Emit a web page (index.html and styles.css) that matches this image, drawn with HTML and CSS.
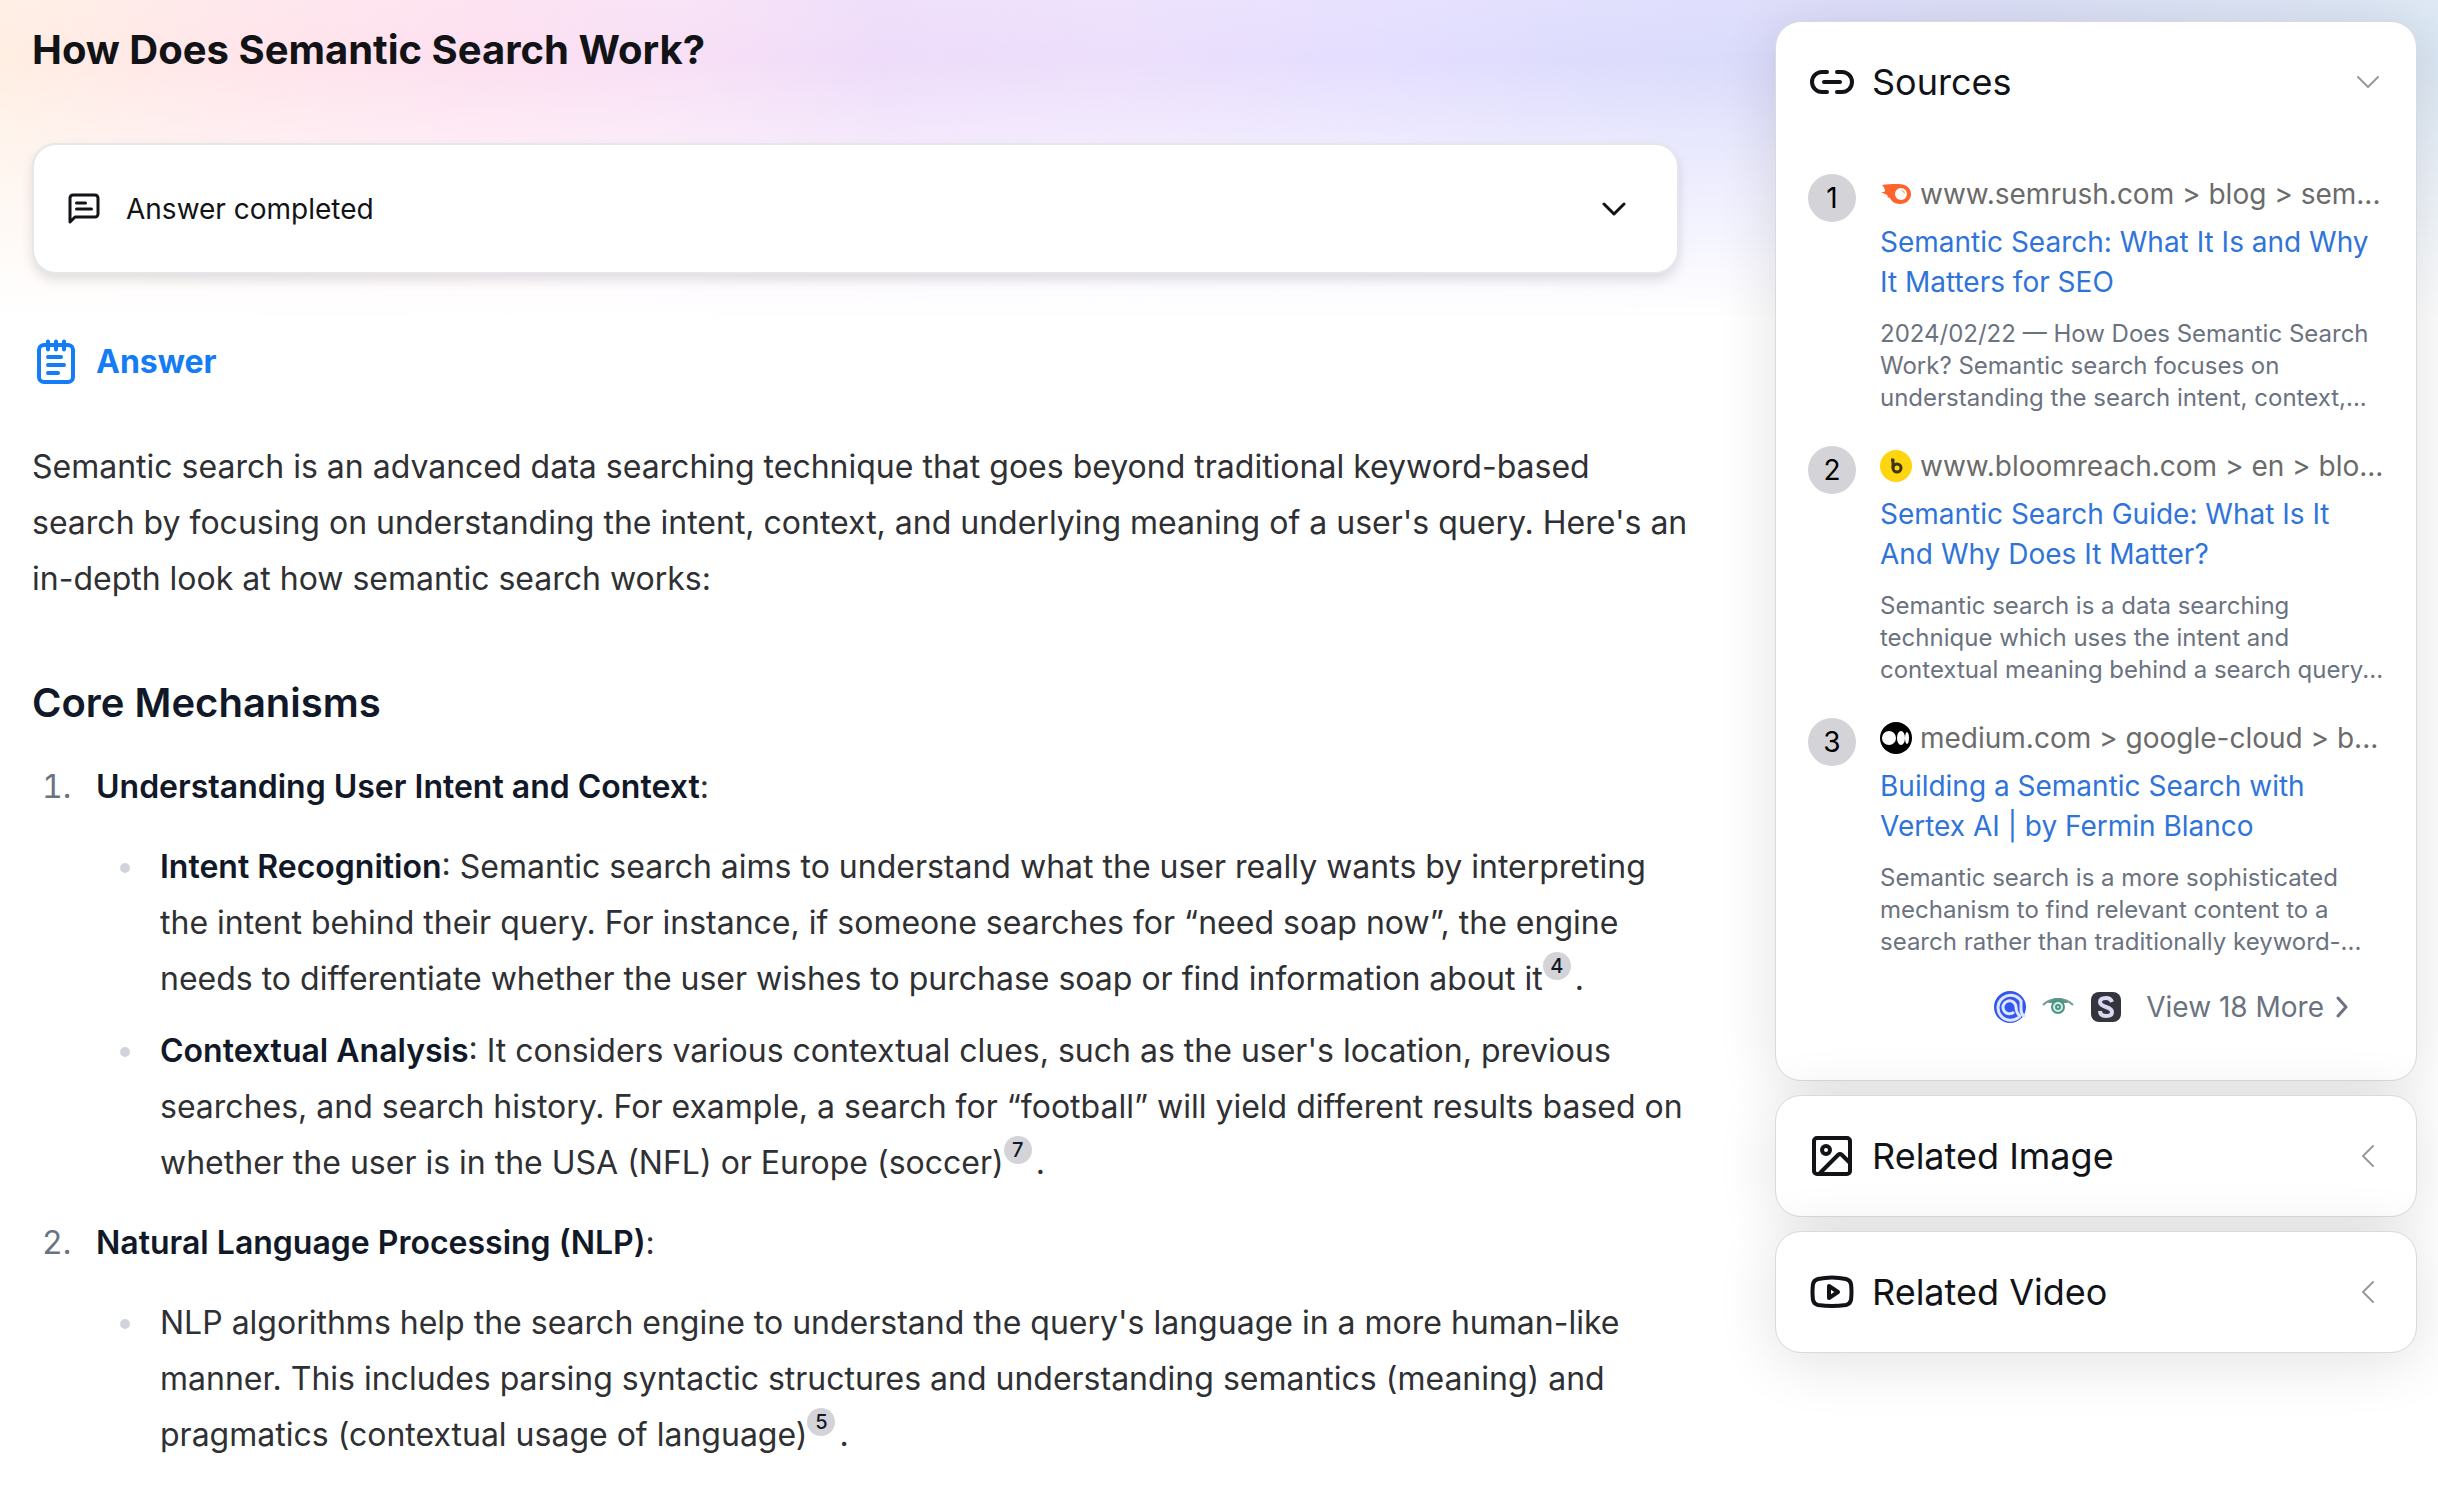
FILE: index.html
```html
<!DOCTYPE html>
<html lang="en">
<head>
<meta charset="utf-8">
<title>How Does Semantic Search Work?</title>
<meta name="viewport" content="width=device-width, initial-scale=1">
<link rel="stylesheet" href="styles.css">
</head>
<body>
<div class="page">
  <main class="content">
    <h1 class="question">How Does Semantic Search Work?</h1>

    <button class="status" type="button">
      <svg class="icon-32" viewBox="0 0 32 32" fill="none" stroke="currentColor" stroke-width="3" stroke-linejoin="round" stroke-linecap="round" aria-hidden="true">
        <path d="M2 29V5a3 3 0 0 1 3-3h22a3 3 0 0 1 3 3v16a3 3 0 0 1-3 3H7z"/>
        <path d="M8.500 10h9M8.500 16h15"/>
      </svg>
      <span class="status-text">Answer completed</span>
      <svg class="chevron-dark" viewBox="0 0 24 24" fill="none" stroke="currentColor" stroke-width="3" stroke-linecap="round" stroke-linejoin="round" aria-hidden="true"><path d="M2 7l10 10L22 7"/></svg>
    </button>

    <h2 class="answer-title">
      <svg class="answer-icon" viewBox="0 0 40 46" fill="none" stroke="currentColor" stroke-width="4" stroke-linecap="round" aria-hidden="true">
        <rect x="3" y="6" width="34" height="37" rx="5"/>
        <path d="M12 2.500v8M20 2.500v8M28 2.500v8M12 18h13M12 26h16M12 34h10"/>
      </svg>
      <span>Answer</span>
    </h2>

    <article class="prose">
      <p>Semantic search is an advanced data searching technique that goes beyond traditional keyword-based search by focusing on understanding the intent, context, and underlying meaning of a user's query. Here's an in-depth look at how semantic search works:</p>
      <h3>Core Mechanisms</h3>
      <ol>
        <li>
          <strong>Understanding User Intent and Context</strong>:
          <ul>
            <li><strong>Intent Recognition</strong>: Semantic search aims to understand what the user really wants by interpreting the intent behind their query. For instance, if someone searches for “need soap now”, the engine needs to differentiate whether the user wishes to purchase soap or find information about it<a class="cite" href="#source-4">4</a>.</li>
            <li><strong>Contextual Analysis</strong>: It considers various contextual clues, such as the user's location, previous searches, and search history. For example, a search for “football” will yield different results based on whether the user is in the USA (NFL) or Europe (soccer)<a class="cite" href="#source-7">7</a>.</li>
          </ul>
        </li>
        <li>
          <strong>Natural Language Processing (NLP)</strong>:
          <ul>
            <li>NLP algorithms help the search engine to understand the query's language in a more human-like manner. This includes parsing syntactic structures and understanding semantics (meaning) and pragmatics (contextual usage of language)<a class="cite" href="#source-5">5</a>.</li>
          </ul>
        </li>
        <li><strong>Machine Learning (ML)</strong>:</li>
      </ol>
    </article>
  </main>

  <aside class="sidebar">
    <section class="card">
      <button class="card-head" type="button" aria-expanded="true">
        <svg class="icon-44" viewBox="0 0 44 44" fill="none" stroke="currentColor" stroke-width="4" stroke-linecap="round" aria-hidden="true">
          <path d="M17 12h-5a10 10 0 0 0 0 20h5M27 12h5a10 10 0 0 1 0 20h-5M14 22h16"/>
        </svg>
        <span class="card-title">Sources</span>
        <svg class="chevron" viewBox="0 0 24 24" fill="none" stroke="currentColor" stroke-width="2" stroke-linecap="round" stroke-linejoin="round" aria-hidden="true"><path d="M2 7l10 10L22 7"/></svg>
      </button>

      <ol class="sources">
        <li class="source">
          <span class="number">1</span>
          <div class="source-body">
            <div class="source-url">
              <svg class="icon-32" viewBox="0 0 32 32" aria-hidden="true">
                <path fill="#ff642d" d="M2 7c4-1 9-1 16-1 8 0 13 4 13 10s-5 10-11 10c-5 0-9-3-10-6l-3-1c1-1 1-1 0-2L1 14c3 0 4 0 4-1 0-2-1-4-3-6z"/>
                <circle cx="21" cy="16" r="6" fill="#fff"/>
                <path fill="#ffb199" d="M21 12a4 4 0 0 1 4 4c-1-1-3-2-4-4z"/>
              </svg>
              <span>www.semrush.com &gt; blog &gt; sem...</span>
            </div>
            <a class="source-link" href="#source-1">Semantic Search: What It Is and Why It Matters for SEO</a>
            <p class="source-text">2024/02/22 — How Does Semantic Search Work? Semantic search focuses on understanding the search intent, context,...</p>
          </div>
        </li>
        <li class="source">
          <span class="number">2</span>
          <div class="source-body">
            <div class="source-url">
              <svg class="icon-32" viewBox="0 0 32 32" aria-hidden="true">
                <circle cx="16" cy="16" r="16" fill="#ffd50f"/>
                <g fill="none" stroke="#3b3512" stroke-width="3"><circle cx="17" cy="18" r="4"/><path d="M13 18V9M11 10h3"/></g>
              </svg>
              <span>www.bloomreach.com &gt; en &gt; blo...</span>
            </div>
            <a class="source-link" href="#source-2">Semantic Search Guide: What Is It And Why Does It Matter?</a>
            <p class="source-text">Semantic search is a data searching technique which uses the intent and contextual meaning behind a search query...</p>
          </div>
        </li>
        <li class="source">
          <span class="number">3</span>
          <div class="source-body">
            <div class="source-url">
              <svg class="icon-32" viewBox="0 0 32 32" aria-hidden="true">
                <circle cx="16" cy="16" r="16" fill="#000"/>
                <g fill="#fff"><circle cx="9" cy="16" r="7"/><ellipse cx="21" cy="16" rx="4" ry="7"/><ellipse cx="27" cy="16" rx="2" ry="6"/></g>
              </svg>
              <span>medium.com &gt; google-cloud &gt; b...</span>
            </div>
            <a class="source-link" href="#source-3">Building a Semantic Search with Vertex AI | by Fermin Blanco</a>
            <p class="source-text">Semantic search is a more sophisticated mechanism to find relevant content to a search rather than traditionally keyword-...</p>
          </div>
        </li>
      </ol>

      <button class="more" type="button">
        <svg class="icon-32" viewBox="0 0 32 32" aria-hidden="true">
          <circle cx="16" cy="16" r="16" fill="#3355f0"/>
          <path d="M25 26A12.500 12.500 0 1 1 27 10V18c0 4 1 6 4 8" fill="none" stroke="#dfe6ff" stroke-width="3"/>
          <path d="M20 21a6.500 6.500 0 1 1 2-5c0 4 1 7 5 10" fill="none" stroke="#dfe6ff" stroke-width="3"/>
        </svg>
        <svg class="icon-32" viewBox="0 0 32 32" aria-hidden="true">
          <path d="M1 14c5-5 9-6 15-6s10 1 15 6" fill="none" stroke="#6f9f92" stroke-width="2"/>
          <path d="M6 12c3-4 6-5 10-5s7 1 10 5z" fill="#5c9487"/>
          <circle cx="16" cy="16" r="6" fill="#d5efe8" stroke="#4b9485" stroke-width="2"/>
          <circle cx="16" cy="16" r="2" fill="none" stroke="#4b9485" stroke-width="2"/>
        </svg>
        <svg class="icon-32" viewBox="0 0 32 32" aria-hidden="true">
          <rect x="1" y="1" width="30" height="30" rx="8" fill="#34343d"/>
          <path d="M22 11c-1-3-3-4-6-4s-6 1-6 4c0 6 12 4 12 10 0 3-3 4-6 4s-6-1-6-5" fill="none" stroke="#dcd8f4" stroke-width="4"/>
        </svg>
        <span class="more-text">View 18 More
          <svg class="more-arrow" viewBox="0 0 12 24" fill="none" stroke="currentColor" stroke-width="3" stroke-linecap="round" stroke-linejoin="round" aria-hidden="true"><path d="M2 3l8 9-8 9"/></svg>
        </span>
      </button>
    </section>

    <section class="card">
      <button class="card-head" type="button" aria-expanded="false">
        <svg class="icon-44" viewBox="0 0 44 44" fill="none" stroke="currentColor" stroke-width="4" stroke-linejoin="round" aria-hidden="true">
          <rect x="4" y="4" width="36" height="36" rx="3"/>
          <circle cx="16" cy="16" r="4"/>
          <path d="M10 39l18-18a3 3 0 0 1 4 0l8 8"/>
        </svg>
        <span class="card-title">Related Image</span>
        <svg class="chevron" viewBox="0 0 24 24" fill="none" stroke="currentColor" stroke-width="2" stroke-linecap="round" stroke-linejoin="round" aria-hidden="true"><path d="M17 2L7 12l10 10"/></svg>
      </button>
    </section>

    <section class="card">
      <button class="card-head" type="button" aria-expanded="false">
        <svg class="icon-44" viewBox="0 0 44 44" fill="none" stroke="currentColor" stroke-width="4" stroke-linejoin="round" aria-hidden="true">
          <path d="M8 9c9-2 19-2 28 0q4 1 5 5 1 8 0 16-1 4-5 5-14 2-28 0-4-1-5-5-1-8 0-16 1-4 5-5z"/>
          <path d="M19 16v12l9-6z"/>
        </svg>
        <span class="card-title">Related Video</span>
        <svg class="chevron" viewBox="0 0 24 24" fill="none" stroke="currentColor" stroke-width="2" stroke-linecap="round" stroke-linejoin="round" aria-hidden="true"><path d="M17 2L7 12l10 10"/></svg>
      </button>
    </section>
  </aside>
</div>
</body>
</html>
```
FILE: styles.css
```css
*,
*::before,
*::after {
  box-sizing: border-box;
}

body {
  margin: 0;
  background: #fff;
  color: #111317;
  font-family: Inter, "Liberation Sans", sans-serif;
  font-optical-sizing: none;
  font-size: 28px;
  line-height: 40px;
}

button {
  margin: 0;
  border: 0;
  background: none;
  color: inherit;
  font: inherit;
  text-align: left;
  cursor: pointer;
}

a {
  color: inherit;
  text-decoration: none;
}

svg {
  display: block;
  flex: none;
}

.page {
  display: grid;
  grid-template-columns: minmax(0, 1fr) 642px;
  column-gap: 96px;
  align-items: start;
  height: 100vh;
  overflow: hidden;
  padding: 0 21px 0 32px;
  background:
    linear-gradient(to bottom, rgba(255, 255, 255, 0.1), rgba(255, 255, 255, 0) 60px, rgba(255, 255, 255, 0.4) 150px, #fff 320px),
    radial-gradient(circle at 1720px 90px, #dbdbfc, rgba(219, 219, 252, 0) 320px),
    linear-gradient(to right, #ffeee2, #ffe6ea 220px, #fde0f0 480px, #f8e0f6 680px, #eedcfa 880px, #ecdffc 1120px, #e4deff 1400px, #dfddfd 1700px, #d8dcf6 2000px, #dbe7f4);
}

.content {
  min-width: 0;
}

.question {
  margin: 0;
  padding: 22px 0 65px;
  font-size: 40px;
  line-height: 56px;
  font-weight: 700;
}

.status {
  display: flex;
  align-items: center;
  width: 100%;
  height: 131px;
  padding: 0 51px 0 34px;
  border: 2px solid #e5e7eb;
  border-radius: 24px;
  background: #fff;
  box-shadow: 0 6px 12px rgba(0, 0, 0, 0.12);
}

.status-text {
  flex: 1;
  padding-left: 26px;
}

.icon-32 {
  width: 32px;
  height: 32px;
}

.icon-44 {
  width: 44px;
  height: 44px;
}

.chevron-dark {
  width: 24px;
  height: 24px;
}

.answer-title {
  display: flex;
  align-items: center;
  gap: 20px;
  margin: 64px 0 53px;
  padding-left: 4px;
  color: #147df5;
  font-size: 32px;
  line-height: 48px;
  font-weight: 700;
}

.answer-icon {
  width: 40px;
  height: 46px;
}

.prose {
  margin-right: -16px;
  color: #2f3033;
  font-size: 32px;
  line-height: 56px;
}

.prose p {
  margin: 0;
}

.prose h3 {
  margin: 68px 0 28px;
  color: #111827;
  font-size: 40px;
  line-height: 56px;
  font-weight: 600;
}

.prose strong {
  color: #111827;
  font-weight: 600;
}

.prose ol,
.prose ul {
  margin: 0;
  padding-left: 64px;
}

.prose li + li {
  margin-top: 24px;
}

.prose ul {
  margin: 24px 0 0;
  list-style: none;
}

.prose ul li + li {
  margin-top: 16px;
}

.prose ol > li::marker {
  content: counter(list-item) ".\a0\2002";
  color: #6b7280;
}

/* Bullet hangs in the list's left padding and takes no width in the line. */
.prose ul > li::before {
  content: "";
  float: left;
  width: 10px;
  height: 10px;
  margin: 24px 0 0 -40px;
  border-radius: 50%;
  background: #d1d5db;
}

.cite {
  display: inline-block;
  width: 28px;
  height: 28px;
  margin-right: 4px;
  border-radius: 50%;
  background: #d4d4d8;
  color: #111827;
  font-size: 20px;
  line-height: 28px;
  font-weight: 500;
  text-align: center;
  vertical-align: 17px;
}

.sidebar {
  display: flex;
  flex-direction: column;
  gap: 14px;
  padding-top: 21px;
}

.card {
  border: 1px solid #d9dade;
  border-radius: 26px;
  background: #fff;
  box-shadow: 0 8px 60px rgba(0, 0, 0, 0.12);
}

.card-head {
  display: flex;
  align-items: center;
  width: 100%;
  height: 120px;
  padding: 0 36px 0 34px;
  font-size: 36px;
  line-height: 48px;
}

.card-title {
  flex: 1;
  padding-left: 18px;
}

.chevron {
  width: 24px;
  height: 24px;
  color: #9a9a9a;
}

.sources {
  display: flex;
  flex-direction: column;
  gap: 32px;
  margin: 0;
  padding: 32px 28px 0 32px;
  list-style: none;
}

.source {
  display: flex;
  align-items: flex-start;
  gap: 24px;
}

.number {
  flex: none;
  width: 48px;
  height: 48px;
  border-radius: 50%;
  background: #d4d4d8;
  color: #000;
  line-height: 48px;
  text-align: center;
}

.source-body {
  flex: 1;
  min-width: 0;
}

.source-url {
  display: flex;
  align-items: center;
  gap: 8px;
  margin-bottom: 8px;
  color: #6b6b6b;
  white-space: nowrap;
}

.source-link {
  display: block;
  color: #2f74d8;
}

.source-text {
  margin: 16px 0 0;
  color: #6b7280;
  font-size: 24px;
  line-height: 32px;
}

.more {
  display: flex;
  align-items: center;
  gap: 16px;
  margin-left: auto;
  padding: 29px 68px 53px 0;
  color: #6b7280;
}

.more-text {
  display: flex;
  align-items: center;
  gap: 12px;
  padding-left: 8px;
}

.more-arrow {
  width: 12px;
  height: 24px;
}
```
